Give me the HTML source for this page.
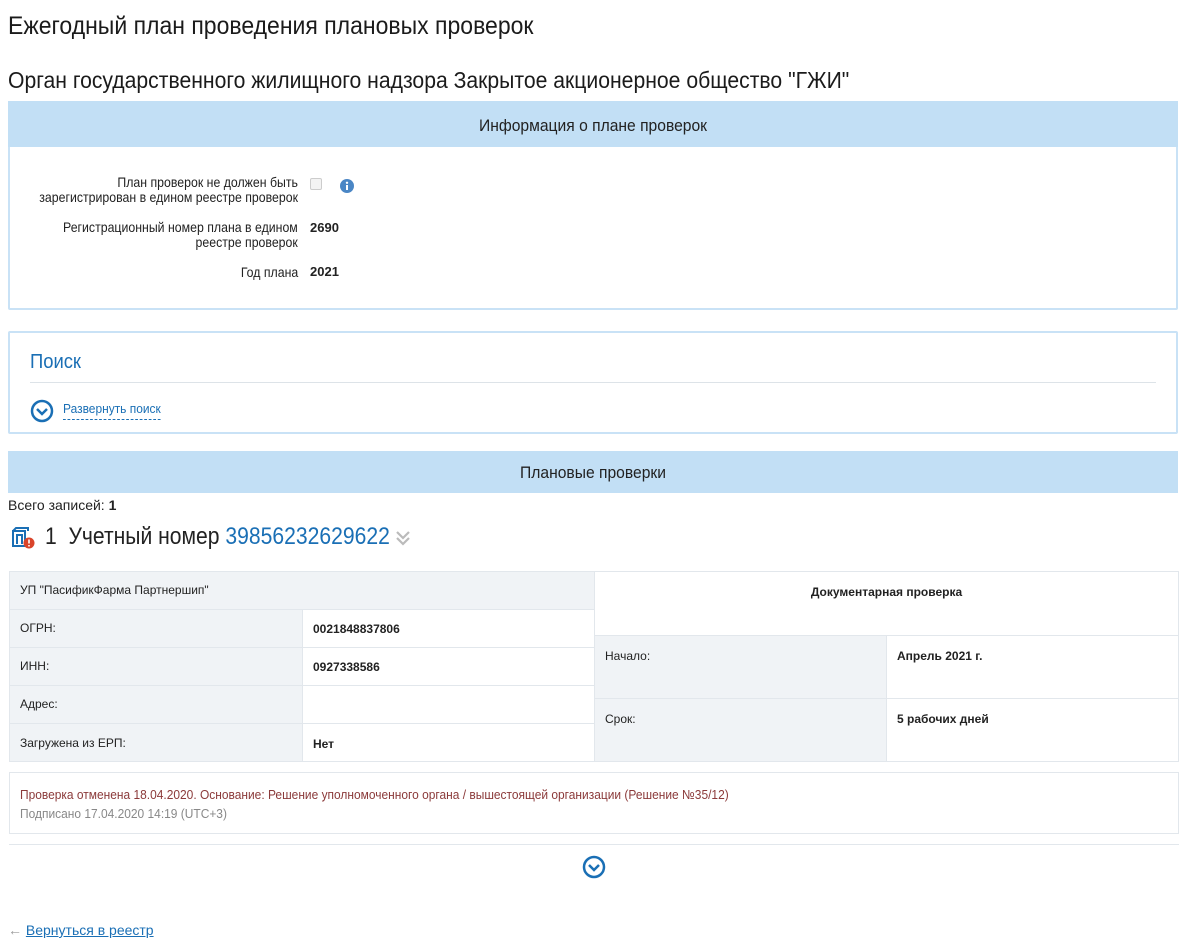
<!DOCTYPE html>
<html><head><meta charset="utf-8">
<style>
*{margin:0;padding:0;box-sizing:border-box}
body{width:1183px;height:951px;background:#fff;font-family:"Liberation Sans",sans-serif;color:#222;position:relative;overflow:hidden}
.a{position:absolute;white-space:nowrap}
.c{transform:scaleX(.92);transform-origin:0 0}
.cr{transform:scaleX(.88);transform-origin:100% 0;text-align:right}
.cc{transform:scaleX(.92);transform-origin:50% 0}
.bar{position:absolute;background:#c2dff5;}
.box{position:absolute;border:2px solid #c9e2f6;border-radius:2px}
.cell{position:absolute;border:1px solid #e2e7ec;font-size:12px;padding:0 10px}
.g{background:#f0f3f6}
</style></head><body>

<div class="a c" style="left:8px;top:12px;font-size:25px;color:#1b1b1b">Ежегодный план проведения плановых проверок</div>
<div class="a c" style="left:8px;top:67px;font-size:23px;color:#1b1b1b">Орган государственного жилищного надзора Закрытое акционерное общество "ГЖИ"</div>

<div class="box" style="left:8px;top:101px;width:1170px;height:209px"></div>
<div class="bar" style="left:8px;top:101px;width:1170px;height:46px"></div>
<div class="a cc" style="left:8px;width:1170px;top:116px;text-align:center;font-size:17px">Информация о плане проверок</div>

<div class="a cr" style="right:885px;top:175px;font-size:14px;line-height:15px">План проверок не должен быть<br>зарегистрирован в едином реестре проверок</div>
<div class="a" style="left:310px;top:178px;width:12px;height:12px;border:1px solid #ccc;border-radius:2px;background:#f3f3f3"></div>
<svg class="a" style="left:340px;top:179px" width="14" height="14" viewBox="0 0 14 14"><circle cx="7" cy="7" r="7" fill="#4a86c5"/><rect x="6" y="6" width="2" height="5" fill="#fff"/><circle cx="7" cy="3.8" r="1.2" fill="#fff"/></svg>
<div class="a cr" style="right:885px;top:220px;font-size:14px;line-height:15px">Регистрационный номер плана в едином<br>реестре проверок</div>
<div class="a" style="left:310px;top:220px;font-size:13px;font-weight:bold">2690</div>
<div class="a cr" style="right:885px;top:264px;font-size:14px">Год плана</div>
<div class="a" style="left:310px;top:264px;font-size:13px;font-weight:bold">2021</div>

<div class="box" style="left:8px;top:331px;width:1170px;height:103px"></div>
<div class="a c" style="left:30px;top:351px;font-size:20px;color:#1a6fb5">Поиск</div>
<div class="a" style="left:30px;top:382px;width:1126px;height:1px;background:#dde3e8"></div>
<svg class="a" style="left:30px;top:399px" width="24" height="24" viewBox="0 0 24 24"><circle cx="12" cy="12" r="10" fill="none" stroke="#1a6fb5" stroke-width="2.5"/><path d="M7 10l5 5 5-5" fill="none" stroke="#1a6fb5" stroke-width="2.5"/></svg>
<div class="a c" style="left:63px;top:401px;font-size:13px;color:#1a6fb5;border-bottom:1px dashed #1a6fb5;padding-bottom:3px">Развернуть поиск</div>

<div class="bar" style="left:8px;top:451px;width:1170px;height:42px"></div>
<div class="a cc" style="left:8px;width:1170px;top:463px;text-align:center;font-size:17px">Плановые проверки</div>
<div class="a" style="left:8px;top:497px;font-size:14px">Всего записей: <b>1</b></div>

<svg class="a" style="left:10px;top:527px" width="26" height="22" viewBox="0 0 26 22"><path d="M3 4v15h12V4z M3 4l3-3h12v3" fill="none" stroke="#1a6fb5" stroke-width="2"/><path d="M7 17V8h5v9" fill="none" stroke="#1a6fb5" stroke-width="2"/><circle cx="19" cy="16" r="5.5" fill="#d9442a"/><rect x="18.2" y="12.5" width="1.6" height="4" fill="#fff"/><rect x="18.2" y="18" width="1.6" height="1.5" fill="#fff"/></svg>
<div class="a" style="left:45px;top:523px;font-size:24px;color:#222;transform:scaleX(.88);transform-origin:0 0">1&nbsp; Учетный номер <span style="color:#1a6fb5">39856232629622</span></div>
<svg class="a" style="left:394px;top:529px" width="18" height="18" viewBox="0 0 18 18"><path d="M3 3l6 6 6-6M3 9l6 6 6-6" fill="none" stroke="#bbb" stroke-width="2.2"/></svg>

<div class="cell g" style="left:9px;top:571px;width:586px;height:39px;line-height:36px">УП "ПасификФарма Партнершип"</div>
<div class="cell g" style="left:9px;top:609px;width:294px;height:39px;line-height:36px">ОГРН:</div>
<div class="cell" style="left:302px;top:609px;width:293px;height:39px;line-height:38px;font-weight:bold">0021848837806</div>
<div class="cell g" style="left:9px;top:647px;width:294px;height:39px;line-height:36px">ИНН:</div>
<div class="cell" style="left:302px;top:647px;width:293px;height:39px;line-height:38px;font-weight:bold">0927338586</div>
<div class="cell g" style="left:9px;top:685px;width:294px;height:39px;line-height:36px">Адрес:</div>
<div class="cell" style="left:302px;top:685px;width:293px;height:39px"></div>
<div class="cell g" style="left:9px;top:723px;width:294px;height:39px;line-height:38px">Загружена из ЕРП:</div>
<div class="cell" style="left:302px;top:723px;width:293px;height:39px;line-height:40px;font-weight:bold">Нет</div>

<div class="cell" style="left:594px;top:571px;width:585px;height:65px;text-align:center;font-weight:bold;padding-top:13px">Документарная проверка</div>
<div class="cell g" style="left:594px;top:635px;width:293px;height:64px;padding-top:13px">Начало:</div>
<div class="cell" style="left:886px;top:635px;width:293px;height:64px;padding-top:13px;font-weight:bold">Апрель 2021 г.</div>
<div class="cell g" style="left:594px;top:698px;width:293px;height:64px;padding-top:13px">Срок:</div>
<div class="cell" style="left:886px;top:698px;width:293px;height:64px;padding-top:13px;font-weight:bold">5 рабочих дней</div>

<div class="a" style="left:9px;top:772px;width:1170px;height:62px;border:1px solid #e2e7ec"></div>
<div class="a c" style="left:20px;top:787px;font-size:13px;color:#8b3a3a">Проверка отменена 18.04.2020. Основание: Решение уполномоченного органа / вышестоящей организации (Решение №35/12)</div>
<div class="a c" style="left:20px;top:806px;font-size:13px;color:#888">Подписано 17.04.2020 14:19 (UTC+3)</div>
<div class="a" style="left:9px;top:844px;width:1170px;height:1px;background:#e2e7ec"></div>
<svg class="a" style="left:582px;top:855px" width="24" height="24" viewBox="0 0 24 24"><circle cx="12" cy="12" r="10" fill="none" stroke="#1a6fb5" stroke-width="2.5"/><path d="M7 10l5 5 5-5" fill="none" stroke="#1a6fb5" stroke-width="2.5"/></svg>

<div class="a" style="left:8px;top:922px;font-size:14px;color:#1a6fb5"><span style="color:#999">←</span> <span style="text-decoration:underline">Вернуться в реестр</span></div>
</body></html>
